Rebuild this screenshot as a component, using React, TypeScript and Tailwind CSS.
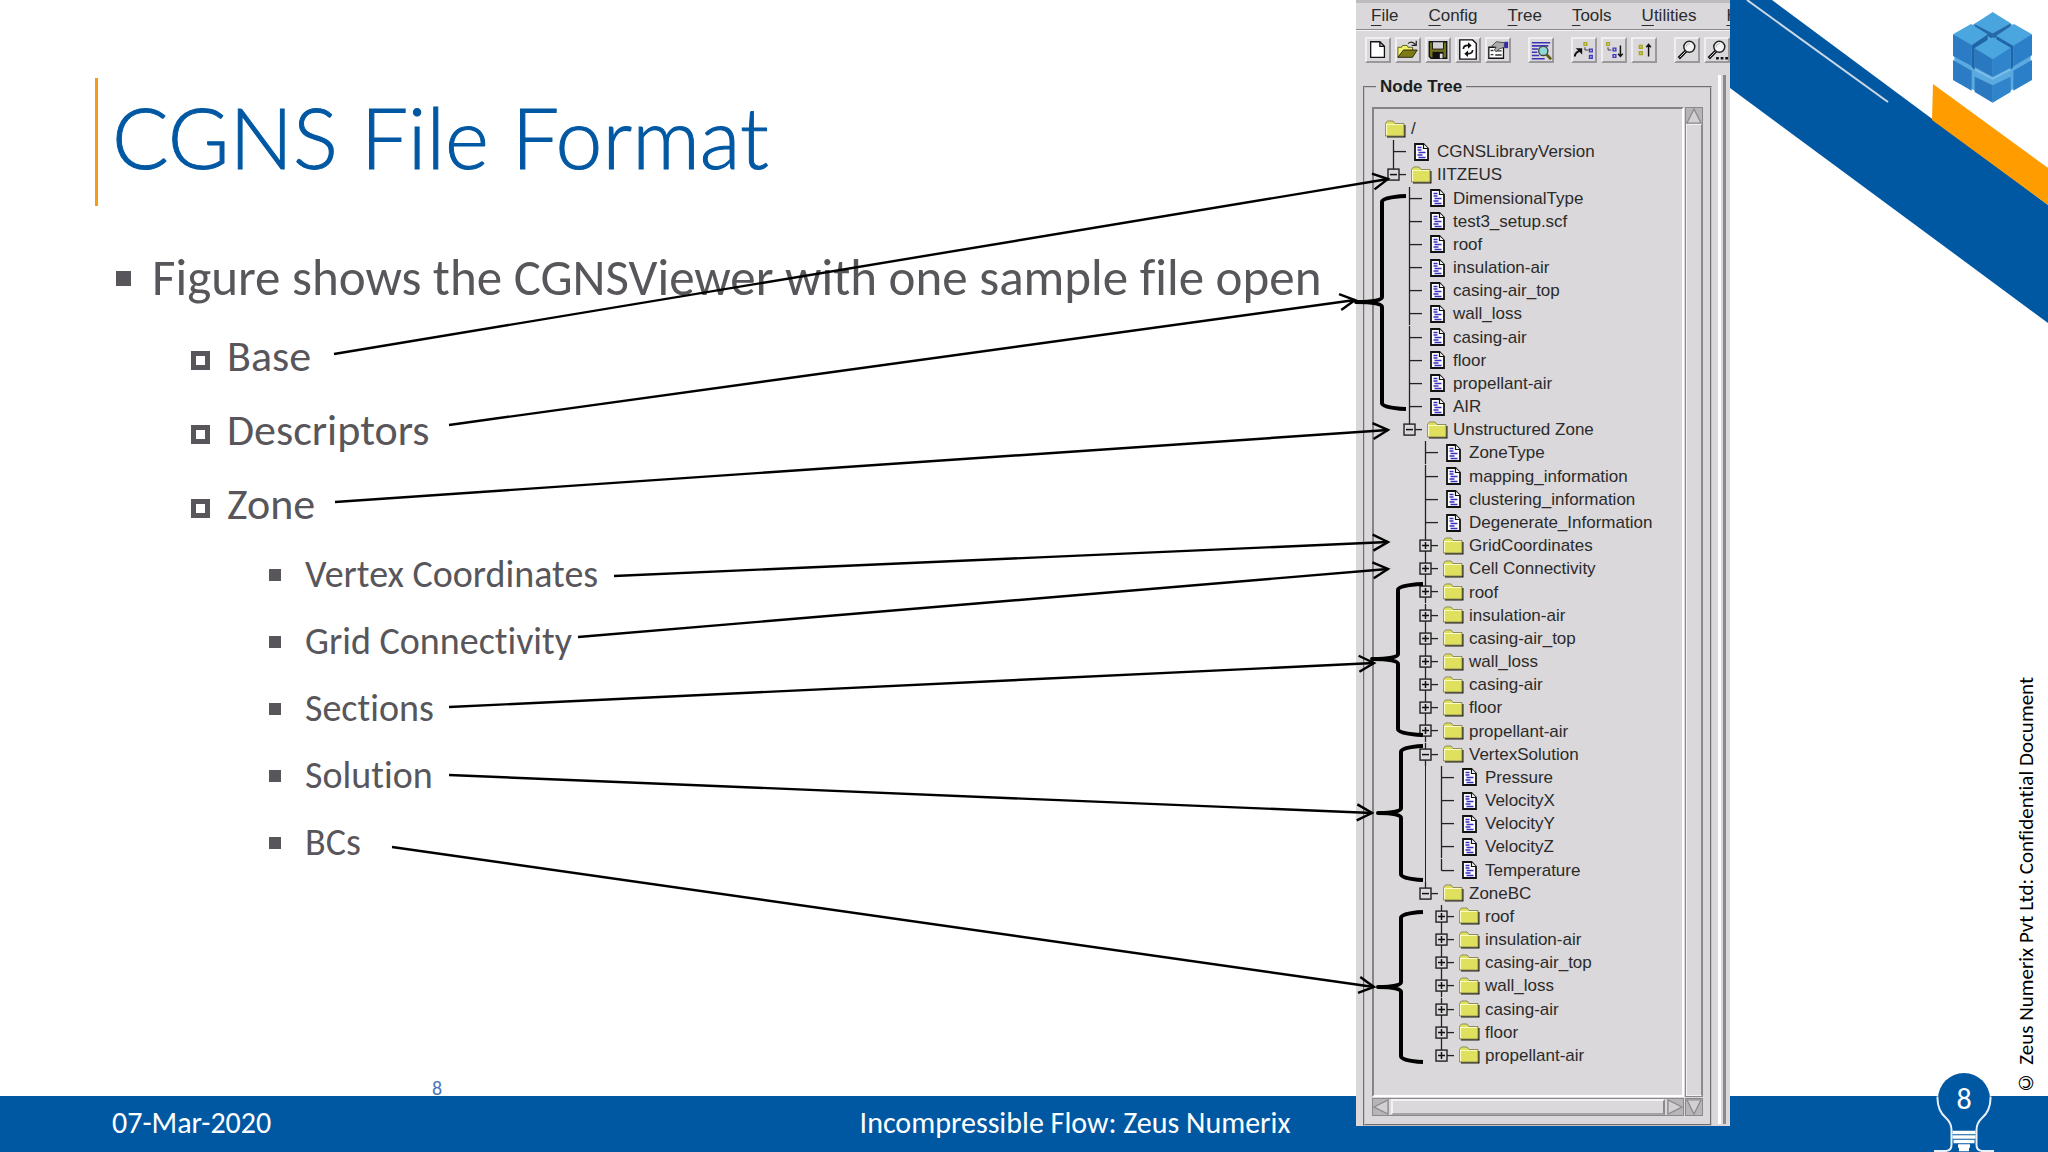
import type { ReactNode } from "react";

type TreeNode = { name: string; kind: "doc" | "folder"; state?: "open" | "closed"; children?: TreeNode[] };

const doc = (name: string): TreeNode => ({ name, kind: "doc" });
const closed = (name: string): TreeNode => ({ name, kind: "folder", state: "closed" });
const open = (name: string, children: TreeNode[]): TreeNode => ({ name, kind: "folder", state: "open", children });

const PARTS = ["roof", "insulation-air", "casing-air_top", "wall_loss", "casing-air", "floor", "propellant-air"];

const TREE: TreeNode[] = [
  doc("CGNSLibraryVersion"),
  open("IITZEUS", [
    ...["DimensionalType", "test3_setup.scf", ...PARTS, "AIR"].map(doc),
    open("Unstructured Zone", [
      ...["ZoneType", "mapping_information", "clustering_information", "Degenerate_Information"].map(doc),
      closed("GridCoordinates"),
      closed("Cell Connectivity"),
      ...PARTS.map(closed),
      open("VertexSolution", ["Pressure", "VelocityX", "VelocityY", "VelocityZ", "Temperature"].map(doc)),
      open("ZoneBC", PARTS.map(closed)),
    ]),
  ]),
];

type Row = { node: TreeNode; last: boolean; guides: boolean[] };

function flatten(nodes: TreeNode[], guides: boolean[] = []): Row[] {
  return nodes.flatMap((node, i) => {
    const last = i === nodes.length - 1;
    return [{ node, last, guides }, ...flatten(node.children ?? [], [...guides, !last])];
  });
}

function FolderIcon() {
  return (
    <svg width="21" height="18" viewBox="0 0 21 18" className="shrink-0" aria-hidden="true">
      <path d="M2 17.5H20.5V5H19v11H2z" fill="#1c1c14" />
      <path d="M.5 16V3.500L2.500 1H8l2 2.500h9V16z" fill="#dfe05e" stroke="#8d8b5c" />
      <path d="M1.500 15V4.500H18" fill="none" stroke="#fbfbc8" strokeWidth="1.200" />
    </svg>
  );
}

function DocIcon() {
  return (
    <svg width="15" height="18" viewBox="0 0 15 18" className="shrink-0" aria-hidden="true">
      <path d="M1 1h8.500L14 5.500V17H1z" fill="#fff" stroke="#111" strokeWidth="1.800" />
      <path d="M9.500 1v4.500H14" fill="#fff" stroke="#111" strokeWidth="1.200" />
      <path d="M3.500 4.500h4M3.500 7h4M4.500 9.500h7M3.500 12h5M4.500 14.500h7" stroke="#3a2fc0" strokeWidth="1.400" />
    </svg>
  );
}

function Connector({ node, last }: { node: TreeNode; last: boolean }) {
  return (
    <span className="relative w-6 shrink-0 self-stretch">
      <svg className="absolute inset-0 h-full w-full" aria-hidden="true">
        <line x1="8.500" x2="8.500" y1="0" y2={last ? "50%" : "100%"} stroke="#222" strokeWidth="1.300" />
        <svg y="50%" overflow="visible">
          <path d="M8.500 0H21" stroke="#222" strokeWidth="1.300" />
          {node.state && <rect x="3" y="-5.500" width="11" height="11" fill="#dad8da" stroke="#222" strokeWidth="1.400" />}
          {node.state && <path d={node.state === "closed" ? "M5 0h7M8.500 -3.500v7" : "M5 0h7"} stroke="#111" strokeWidth="1.500" />}
        </svg>
      </svg>
    </span>
  );
}

function Guide({ on }: { on: boolean }) {
  return (
    <span className="flex w-4 shrink-0 justify-center self-stretch">{on && <span className="w-px bg-[#222]" />}</span>
  );
}

function NodeTree() {
  return (
    <ul className="flex min-h-0 flex-1 flex-col pl-[11px] text-[17px] leading-none text-[#2b2b2b]">
      <li className="flex flex-1 items-center gap-[5px]">
        <FolderIcon />/
      </li>
      {flatten(TREE).map(({ node, last, guides }, i) => (
        <li key={i} className="flex flex-1 items-center">
          {guides.map((on, g) => (
            <Guide key={g} on={on} />
          ))}
          <Connector node={node} last={last} />
          <span className="flex w-7 shrink-0 justify-center pr-1">{node.kind === "folder" ? <FolderIcon /> : <DocIcon />}</span>
          <span className="whitespace-nowrap">{node.name}</span>
        </li>
      ))}
    </ul>
  );
}

const SEARCH = (
  <>
    <path d="M11 13 3 21" stroke="#111" strokeWidth="3.500" />
    <path d="M11 13 4 20" stroke="#ddd" strokeWidth="1" />
    <circle cx="14.500" cy="8.500" r="6" fill="#f4f4f4" stroke="#222" strokeWidth="1.600" />
    <path d="M11 9q0-4 4-4" fill="none" stroke="#aaa" />
  </>
);

const TOOLS: { label: string; icon: ReactNode; gap?: boolean }[] = [
  { label: "New", icon: <path d="M4 3h10l5 5v12H4zM14 3v5h5" fill="#fff" stroke="#111" strokeWidth="1.400" /> },
  {
    label: "Open",
    icon: (
      <>
        <path d="M1 20V9h4l1-2h5l1 2h5v4" fill="#f2ef6a" stroke="#55531a" />
        <path d="M1 20 7 12h15l-5 8z" fill="#7d7a16" stroke="#222208" />
        <path d="M12 5q4-3.500 8 1M21 2v5h-5" fill="none" stroke="#222" strokeWidth="1.300" />
      </>
    ),
  },
  {
    label: "Save",
    icon: (
      <>
        <path d="M2.500 3h19v18h-17l-2-2z" fill="#74721c" stroke="#111" strokeWidth="1.500" />
        <path d="M6 3h12v8H6z" fill="#d4d2d4" stroke="#111" />
        <path d="M6 14h12v7H6z" fill="#111" />
        <path d="M14 16h3v5h-3z" fill="#ddd" />
      </>
    ),
  },
  {
    label: "Reload",
    icon: (
      <>
        <path d="M3 1h14l4 4v17H3z" fill="#fff" stroke="#111" strokeWidth="1.500" />
        <path d="M7 11q0-4 5-4M17 12q0 4-5 4" fill="none" stroke="#111" strokeWidth="1.800" />
        <path d="m12 3.500 4 3.500-4 3.500zM12 12.500 8 16l4 3.500z" fill="#111" />
      </>
    ),
  },
  {
    label: "Properties",
    icon: (
      <>
        <path d="M2 9h16v12H2z" fill="#fff" stroke="#111" strokeWidth="1.400" />
        <path d="M4 12.500h3M4 17h3M9 13h7M9 17.500h7" stroke="#333" strokeWidth="1.500" />
        <path d="M5 8 10 3l9 1v5l-6 2-3 3-2-2 2-3z" fill="#aaa" stroke="#444" />
        <path d="M19 3h4v7h-4z" fill="#3429b0" />
      </>
    ),
  },
  {
    label: "View data",
    gap: true,
    icon: (
      <>
        <path d="M2 4h20M2 7.500h18M2 11h7M2 14.500h6M2 18h8M2 21.500h14" stroke="#3b34b8" strokeWidth="1.700" />
        <circle cx="14.500" cy="13" r="5" fill="#8fd8d8" stroke="#444" strokeWidth="1.500" />
        <path d="m18 17 5 5" stroke="#5d5a18" strokeWidth="3" />
      </>
    ),
  },
  {
    label: "Follow link",
    gap: true,
    icon: (
      <>
        <path d="M2 19q0-4 5-6" fill="none" stroke="#111" strokeWidth="2.200" />
        <path d="m3 10 7 0v7z" fill="#111" />
        <path d="M12 4h3v3h-3z" fill="none" stroke="#a8a81e" strokeWidth="1.500" />
        <path d="M13 9v3h4" fill="none" stroke="#333" />
        <path d="M18 11h3v3h-3zM18 18h3v3h-3z" fill="none" stroke="#4038c0" strokeWidth="1.500" />
      </>
    ),
  },
  {
    label: "Expand",
    icon: (
      <>
        <path d="M4 4h3v3H4z" fill="none" stroke="#a8a81e" strokeWidth="1.500" />
        <path d="M5.500 9v3H9" fill="none" stroke="#333" />
        <path d="M11 10h3v3h-3zM11 17h3v3h-3z" fill="none" stroke="#4038c0" strokeWidth="1.500" />
        <path d="M19 7v12M16.500 16l2.500 3 2.500-3" fill="none" stroke="#111" strokeWidth="1.600" />
      </>
    ),
  },
  {
    label: "Collapse",
    icon: (
      <>
        <path d="M7 7h3v3H7zM7 14h3v3H7z" fill="none" stroke="#a8a81e" strokeWidth="1.700" />
        <path d="M17 6v13M14.500 9 17 6l2.500 3" fill="none" stroke="#111" strokeWidth="1.600" />
      </>
    ),
  },
  { label: "Find", gap: true, icon: SEARCH },
  {
    label: "Find next",
    icon: (
      <>
        {SEARCH}
        <path d="M11 21h13" stroke="#111" strokeWidth="2.500" strokeDasharray="3 2" />
      </>
    ),
  },
];

const MENUS = ["File", "Config", "Tree", "Tools", "Utilities", "Help"];

/** Curly brackets grouping tree rows, in the viewer's own coordinates. */
const BRACES = [
  { top: 196, bottom: 409, tip: 302, x0: 0, spine: 26, x1: 50 },
  { top: 584, bottom: 735, tip: 659, x0: 16, spine: 42, x1: 67 },
  { top: 746, bottom: 880, tip: 813, x0: 22, spine: 45, x1: 67 },
  { top: 912, bottom: 1062, tip: 987, x0: 22, spine: 45, x1: 67 },
];

function ScrollButton({ label, d }: { label: string; d: string }) {
  return (
    <button type="button" aria-label={label} className="block size-4 shrink-0 bg-[#b7b5b7]">
      <svg width="16" height="16" viewBox="0 0 16 16">
        <path d={d} fill="#d2d0d2" stroke="#8a888a" strokeWidth="1.200" />
      </svg>
    </button>
  );
}

function Viewer() {
  return (
    <section
      aria-label="CGNS viewer"
      className="relative z-10 col-start-2 row-span-2 row-start-1 mb-[26px] flex flex-col overflow-hidden border-t-[3px] border-[#bdbbbb] bg-[#dad8da] font-['Liberation_Sans',Arial,sans-serif]"
    >
      <nav className="flex h-[27px] shrink-0 items-center gap-[30px] border-b border-[#8b898b] pl-[15px] text-[17px] text-[#2b2b2b]">
        {MENUS.map((m) => (
          <button type="button" key={m} className="shrink-0">
            <span className="underline underline-offset-4">{m[0]}</span>
            {m.slice(1)}
          </button>
        ))}
      </nav>
      <div className="flex shrink-0 gap-1 border-t border-[#f4f4f4] pt-1.5 pl-[9px]">
        {TOOLS.map((t) => (
          <button
            type="button"
            key={t.label}
            aria-label={t.label}
            className={
              "flex size-[26px] shrink-0 items-center justify-center border-2 border-[#efefef] border-r-[#9a989a] border-b-[#9a989a]" +
              (t.gap ? " ml-[13px]" : "")
            }
          >
            <svg width="22" height="22" viewBox="0 0 24 24" className="shrink-0">{t.icon}</svg>
          </button>
        ))}
      </div>
      <div className="flex min-h-0 flex-1 gap-1.5 pt-3 pl-[7px]">
        <fieldset className="flex w-[349px] flex-col border-2 border-[#c4c2c4] px-[7px] pt-2 pb-2 [border-style:groove]">
          <legend className="ml-1 px-1 text-[17px] leading-6 font-bold text-[#1d1d1d]">Node Tree</legend>
          <div className="grid min-h-0 flex-1 grid-cols-[1fr_18px] grid-rows-[1fr_18px] gap-px">
            <div className="flex flex-col border-2 border-[#858385] border-r-white border-b-white pt-2 pb-7">
              <NodeTree />
            </div>
            <div className="flex flex-col border border-[#8b898b]">
              <ScrollButton label="Scroll up" d="M8 1 15 15H1z" />
              <div className="flex-1 border border-[#f2f2f2] border-r-[#8b898b]" />
            </div>
            <div className="flex border border-[#8b898b]">
              <ScrollButton label="Scroll left" d="M1 8 15 1v14z" />
              <div className="mx-0.5 flex-1 border-2 border-[#f2f2f2] border-r-[#8b898b] border-b-[#a5a3a5]" />
              <ScrollButton label="Scroll right" d="M15 8 1 1v14z" />
            </div>
            <div className="flex border border-[#8b898b]">
              <ScrollButton label="Scroll down" d="M8 15 1 1h14z" />
            </div>
          </div>
        </fieldset>
        <div className="mb-0.5 w-2 border-r-[3px] border-l-[3px] border-r-[#8b898b] border-l-white" />
      </div>
    </section>
  );
}

function Braces() {
  return (
    <div className="pointer-events-none relative z-20 col-start-2 row-span-2 row-start-1">
      <svg className="absolute inset-0 h-full w-full" viewBox="0 0 374 1152" preserveAspectRatio="none" overflow="visible" aria-hidden="true">
        {BRACES.map(({ top, bottom, tip, x0, spine, x1 }) => (
          <path
            key={top}
            fill="none"
            stroke="#000"
            strokeWidth="4"
            strokeLinejoin="round"
            d={`M${x1} ${top}Q${spine} ${top + 1} ${spine} ${top + 6}V${tip - 5}Q${spine} ${tip} ${x0} ${tip}Q${spine} ${tip} ${spine} ${tip + 5}V${bottom - 6}Q${spine} ${bottom - 1} ${x1} ${bottom}`}
          />
        ))}
      </svg>
    </div>
  );
}

/** dx is the arrow tip's distance from the left edge of the viewer; the arrows stretch with the text column. */
const ARROWS = [
  { x1: 334, y1: 354, dx: 32, y2: 179 },
  { x1: 449, y1: 425, dx: -1, y2: 300 },
  { x1: 335, y1: 502, dx: 32, y2: 430 },
  { x1: 614, y1: 576, dx: 32, y2: 542 },
  { x1: 578, y1: 637, dx: 32, y2: 569 },
  { x1: 449, y1: 707, dx: 18, y2: 663 },
  { x1: 449, y1: 775, dx: 16, y2: 813 },
  { x1: 392, y1: 847, dx: 18, y2: 987 },
];

function Arrows() {
  return (
    <svg className="pointer-events-none absolute inset-0 z-20 h-full w-full overflow-visible" aria-hidden="true">
      <defs>
        <marker id="head" markerUnits="userSpaceOnUse" markerWidth="20" markerHeight="20" refX="17" refY="10" orient="auto">
          <path d="M2 2 17 10 2 18" fill="none" stroke="#000" strokeWidth="2.400" />
        </marker>
      </defs>
      {ARROWS.map((a) => (
        <svg key={a.y1} x={a.dx} width="100%" height="100%" overflow="visible">
          <line x1={a.x1 - a.dx} y1={a.y1} x2="100%" y2={a.y2} stroke="#000" strokeWidth="2.400" markerEnd="url(#head)" />
        </svg>
      ))}
    </svg>
  );
}

function Decoration() {
  return (
    <svg className="block w-full" viewBox="0 0 318 323" aria-hidden="true">
      <path d="M0 0H42L318 205V323L0 88z" fill="#0058a3" />
      <path d="M203 84 318 168V205L202 120z" fill="#ff9c00" />
      <path d="M17 0 158 102" stroke="#cdd9e6" strokeWidth="2" />
      <g transform="translate(-10 0) scale(.33333)">
        <path d="M818 40 932 106V236L818 304 703 236V106z" fill="#5aa9df" />
        <path d="M764 72 818 100 872 70V84L818 118 764 84z" fill="#2569a6" />
        <path d="M755 135 803 103V120L764 145V210L755 200zM880 137 829 107V120L872 145V210L880 200z" fill="#1f66a8" />
        <path d="M818 36 872 70 818 100 764 72z" fill="#4aa5df" />
        <path d="M753 72 803 103 755 135 699 103z" fill="#4ba6e0" />
        <path d="M882 72 936 103 880 137 829 107z" fill="#4ba6e0" />
        <path d="M818 112 872 143 818 178 764 145z" fill="#4ba6e0" />
        <path d="M699 103 755 135V198L699 168z" fill="#2b7cc4" />
        <path d="M936 103 880 137V199L936 166z" fill="#2b7fc8" />
        <path d="M764 145 818 178V231L764 201z" fill="#2978c0" />
        <path d="M872 143 818 178V231L872 203z" fill="#2f84cc" />
        <path d="M699 180 755 212V272L699 240z" fill="#2b7cc4" />
        <path d="M936 180 880 212V272L936 240z" fill="#2b7fc8" />
        <path d="M764 230 818 256V308L764 276z" fill="#2978c0" />
        <path d="M872 230 818 256V308L872 276z" fill="#2f84cc" />
        <path d="M764 208 818 236 872 208" fill="none" stroke="#7cbdea" strokeWidth="6" />
      </g>
    </svg>
  );
}

function Bulb() {
  return (
    <div className="absolute right-[54px] bottom-0 h-[80px] w-[60px]">
      <svg width="60" height="80" viewBox="0 0 60 80" aria-hidden="true">
        <circle cx="30" cy="27" r="26" fill="#0058a3" />
        <path
          d="M3.500 24.500Q3 38 12 46Q17.500 51 17.500 58V73Q17.500 78.500 12 79H-1M56.500 24.500Q57 38 48 46Q42.500 51 42.500 58V73Q42.500 78.500 48 79H61"
          fill="none"
          stroke="#e8f1f9"
          strokeWidth="2"
        />
        <path d="M18.500 60.500H41.500M18.500 65H41.500M19.500 69.500H40.500M24 74H36M25 77.500H35" stroke="#fff" strokeWidth="3.600" />
      </svg>
      <span className="absolute inset-x-0 top-[9px] text-center text-[30px] leading-9 text-white">8</span>
    </div>
  );
}

const TOPICS = ["Base", "Descriptors", "Zone"];
const ZONE_PARTS = ["Vertex Coordinates", "Grid Connectivity", "Sections", "Solution", "BCs"];

export default function App() {
  return (
    <div className="relative grid min-h-screen grid-cols-[1fr_374px_318px] grid-rows-[1fr_56px] overflow-hidden bg-white font-['Carlito','Lato',sans-serif] [font-variant-ligatures:none]">
      <main className="relative col-start-1 row-start-1 flex flex-col text-[#58565a]">
        <header className="mt-[78px] ml-[95px] flex h-32 items-center border-l-[3px] border-[#f59c14] pb-2.5 pl-3.5">
          <h1 className="font-['Lato',sans-serif] text-[84px] leading-none font-light whitespace-nowrap text-[#0058a3] [-webkit-text-stroke:1px_#0058a3]">
            CGNS File Format
          </h1>
        </header>
        <ul className="mt-[31px] whitespace-nowrap">
          <li>
            <div className="flex h-[82px] items-center pl-[116px] text-[51px]">
              <span className="w-9 shrink-0">
                <span className="block size-[15px] bg-[#58565a]" />
              </span>
              Figure shows the CGNSViewer with one sample file open
            </div>
            <ul>
              {TOPICS.map((t) => (
                <li key={t} className="flex h-[74px] items-center pl-[191px] text-[44px]">
                  <span className="w-9 shrink-0 pt-2">
                    <span className="block size-[19px] border-[5px] border-[#58565a]" />
                  </span>
                  {t}
                </li>
              ))}
              <li>
                <ul>
                  {ZONE_PARTS.map((t) => (
                    <li key={t} className="flex h-[67px] items-center pl-[269px] text-[38px]">
                      <span className="w-9 shrink-0">
                        <span className="block size-3 bg-[#58565a]" />
                      </span>
                      {t}
                    </li>
                  ))}
                </ul>
              </li>
            </ul>
          </li>
        </ul>
        <span className="mt-auto pl-[432px] text-[20px] leading-4 text-[#4a74b8]">8</span>
        <Arrows />
      </main>

      <Viewer />
      <Braces />

      <aside className="col-start-3 row-start-1 flex flex-col justify-between">
        <Decoration />
        <p className="mr-2.5 rotate-180 self-end text-[21px] leading-6 whitespace-nowrap text-black [writing-mode:vertical-rl]">
          © Zeus Numerix Pvt Ltd: Confidential Document
        </p>
      </aside>

      <footer className="relative col-span-3 col-start-1 row-start-2 grid grid-cols-[794px_1fr_692px] items-center bg-[#0058a3] pb-1 text-[30px] text-white">
        <span className="pl-[112px]">07-Mar-2020</span>
        <span className="text-center whitespace-nowrap">Incompressible Flow: Zeus Numerix</span>
        <Bulb />
      </footer>
    </div>
  );
}
